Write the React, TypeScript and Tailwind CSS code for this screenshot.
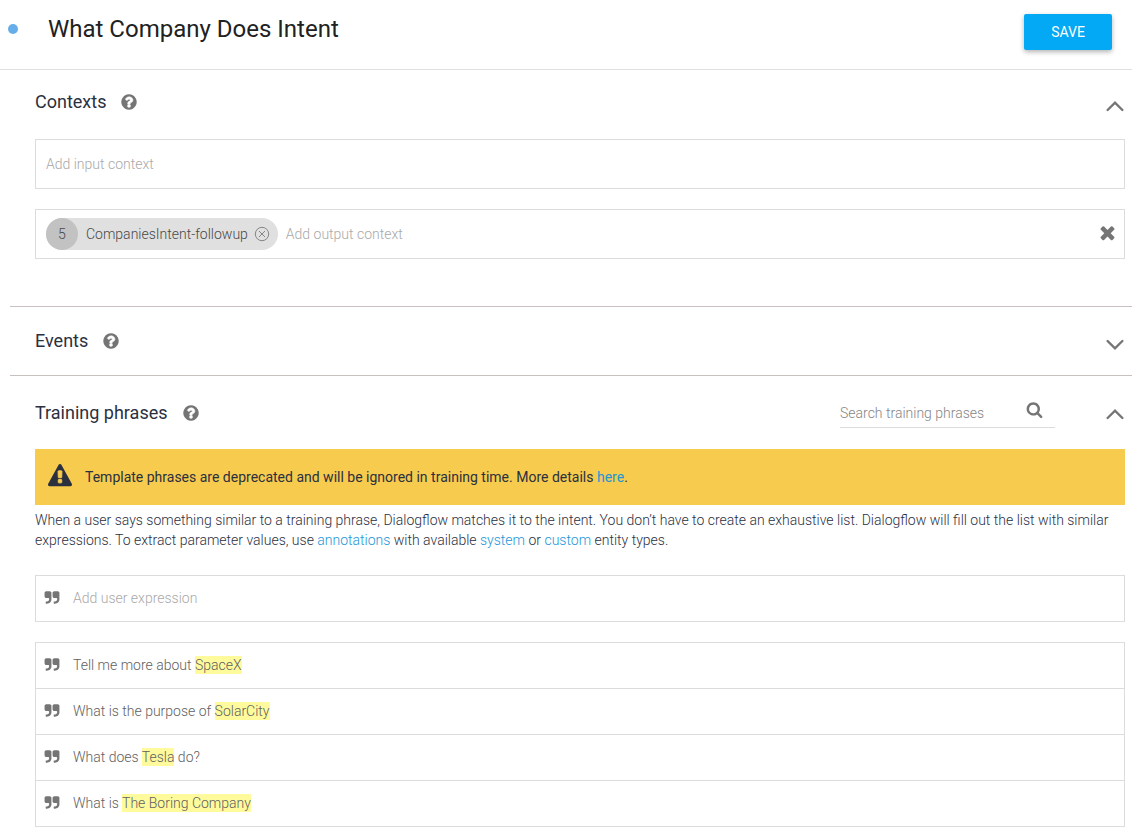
import { useState } from "react";
import type { ReactNode } from "react";

const QUESTION_MARK =
  "M1024 1376v-192q0-14-9-23t-23-9h-192q-14 0-23 9t-9 23v192q0 14 9 23t23 9h192q14 0 23-9t9-23zm256-672q0-88-55.5-163t-138.5-116-170-41q-243 0-371 213-15 24 8 42l132 100q7 6 19 6 16 0 25-12 53-68 86-92 34-24 86-24 48 0 85.5 26t37.5 59q0 38-20 61t-68 45q-63 28-115.5 86.5t-52.5 125.5v36q0 14 9 23t23 9h192q14 0 23-9t9-23q0-19 21.5-49.5t54.5-49.5q32-18 49-28.5t46-35 44.5-48 28-60.5 12.5-81z";
const EXCLAMATION_MARK =
  "M1024 1375v-190q0-14-9.5-23.5t-22.5-9.5h-192q-13 0-22.5 9.5t-9.5 23.5v190q0 14 9.5 23.5t22.5 9.5h192q13 0 22.5-9.5t9.5-23.5zm-2-374l18-459q0-12-10-19-13-11-24-11h-220q-11 0-24 11-10 7-10 21l17 457q0 10 10 16.5t24 6.5h185q14 0 23.5-6.5t10.5-16.5z";

const ICONS = {
  question:
    "M1664 896q0 209-103 385.5t-279.5 279.5-385.5 103-385.5-103-279.5-279.5-103-385.5 103-385.5 279.5-279.5 385.5-103 385.5 103 279.5 279.5 103 385.5z",
  times:
    "M1490 1322q0 40-28 68l-136 136q-28 28-68 28t-68-28l-294-294-294 294q-28 28-68 28t-68-28l-136-136q-28-28-28-68t28-68l294-294-294-294q-28-28-28-68t28-68l136-136q28-28 68-28t68 28l294 294 294-294q28-28 68-28t68 28l136 136q28 28 28 68t-28 68l-294 294 294 294q28 28 28 68z",
  search:
    "M1216 832q0-185-131.5-316.5t-316.5-131.5-316.5 131.5-131.5 316.5 131.5 316.5 316.5 131.5 316.5-131.5 131.5-316.5zm512 832q0 52-38 90t-90 38q-54 0-90-38l-343-342q-179 124-399 124-143 0-273.5-55.5t-225-150-150-225-55.5-273.5 55.5-273.5 150-225 225-150 273.5-55.5 273.5 55.5 225 150 150 225 55.5 273.5q0 220-124 399l343 343q37 37 37 90z",
  warning:
    "M1008 67l768 1408q35 63-2 126-17 29-46.5 46t-63.5 17h-1536q-34 0-63.5-17t-46.5-46q-37-63-2-126l768-1408q17-31 47-49t65-18 65 18 47 49z",
  quote:
    "M832 320v704q0 104-40.5 198.5t-109.5 163.5-163.5 109.5-198.5 40.5h-64q-26 0-45-19t-19-45v-128q0-26 19-45t45-19h64q106 0 181-75t75-181v-32q0-40-28-68t-68-28h-224q-80 0-136-56t-56-136v-384q0-80 56-136t136-56h384q80 0 136 56t56 136zm896 0v704q0 104-40.5 198.5t-109.5 163.5-163.5 109.5-198.5 40.5h-64q-26 0-45-19t-19-45v-128q0-26 19-45t45-19h64q106 0 181-75t75-181v-32q0-40-28-68t-68-28h-224q-80 0-136-56t-56-136v-384q0-80 56-136t136-56h384q80 0 136 56t56 136z",
};

function Icon({ name, className, children }: { name: keyof typeof ICONS; className: string; children?: ReactNode }) {
  return (
    <svg viewBox="0 0 1792 1792" fill="currentColor" aria-hidden="true" className={`block shrink-0 ${className}`}>
      <path d={ICONS[name]} />
      {children}
    </svg>
  );
}

function SectionTitle({ children, className = "" }: { children: ReactNode; className?: string }) {
  return (
    <div className={`flex items-center gap-[14px] ${className}`}>
      <h2 className="text-lg leading-6 text-[#2b303f]">{children}</h2>
      <button type="button" aria-label={`Help: ${children}`} className="text-[#757575]">
        <Icon name="question" className="size-[18px]">
          <path d={QUESTION_MARK} className="fill-white stroke-white" strokeWidth="60" />
        </Icon>
      </button>
    </div>
  );
}

function Toggle({ open, label }: { open: boolean; label: string }) {
  return (
    <button type="button" aria-expanded={open} aria-label={`Toggle ${label}`} className="text-[#757575]">
      <svg viewBox="0 0 20 12" className="block h-3 w-5" fill="none" stroke="currentColor" strokeWidth="2.4" strokeLinecap="round" strokeLinejoin="miter" aria-hidden="true">
        <path d={open ? "M2.6 10 10 2.6l7.4 7.4" : "M2.6 2 10 9.4l7.4-7.4"} />
      </svg>
    </button>
  );
}

const phrases = [
  { before: "Tell me more about ", entity: "SpaceX", after: "" },
  { before: "What is the purpose of ", entity: "SolarCity", after: "" },
  { before: "What does ", entity: "Tesla", after: " do?" },
  { before: "What is ", entity: "The Boring Company", after: "" },
];

const link = "text-[#2196d8]";

export default function App() {
  const [name, setName] = useState("What Company Does Intent");

  return (
    <div className="min-h-screen bg-white pb-2 font-['Roboto',sans-serif] text-sm font-light text-[#616161] antialiased">
      <header className="flex h-[70px] items-start border-b border-[#e0e0e0] pr-5 pl-2">
        <span className="mt-6 size-[10px] shrink-0 rounded-full bg-[#67ade9]" />
        <input
          aria-label="Intent name"
          value={name}
          onChange={(e) => setName(e.target.value)}
          className="mt-3 ml-[30px] h-[34px] min-w-0 flex-1 text-2xl font-normal text-[#212121] outline-none"
        />
        <button
          type="button"
          className="mt-3.5 h-9 w-[88px] rounded-[2px] bg-[#03a9f4] font-normal text-white shadow-[0_2px_5px_0_rgba(0,0,0,0.3)]"
        >
          SAVE
        </button>
      </header>

      <main className="ml-[10px]">
        <section className="border-b border-[#c9c0c0] pr-[7px] pb-[47px] pl-[25px]">
          <div className="flex h-[69px] items-center justify-between pt-[3px] font-normal">
            <SectionTitle className="pb-2">Contexts</SectionTitle>
            <Toggle open label="Contexts" />
          </div>
          <div className="flex h-[50px] items-center border border-[#dcdcdc] px-[10px]">
            <input
              aria-label="Input context"
              placeholder="Add input context"
              className="h-8 w-full outline-none placeholder:text-[#a9a9a9]"
            />
          </div>
          <div className="mt-5 flex h-[50px] items-center border border-[#dcdcdc] px-[10px]">
            <div className="flex h-8 shrink-0 items-center rounded-full bg-[#e0e0e0] pr-2 text-[#484848]">
              <span className="flex size-8 items-center justify-center rounded-full bg-[#c2c2c2]">5</span>
              <span className="ml-2">CompaniesIntent-followup</span>
              <button type="button" aria-label="Remove CompaniesIntent-followup" className="ml-[6px] text-[#858585]">
                <svg viewBox="0 0 16 16" className="block size-4" fill="none" stroke="currentColor" strokeWidth="1" aria-hidden="true">
                  <circle cx="8" cy="8" r="6.7" />
                  <path d="m5 5 6 6M11 5l-6 6" />
                </svg>
              </button>
            </div>
            <input
              aria-label="Output context"
              placeholder="Add output context"
              className="ml-2 h-8 min-w-0 flex-1 outline-none placeholder:text-[#a9a9a9]"
            />
            <button type="button" aria-label="Clear output contexts" className="-mr-1 pb-1 text-[#757575]">
              <Icon name="times" className="size-[21px]" />
            </button>
          </div>
        </section>

        <section className="border-b border-[#c9c0c0] pr-[7px] pl-[25px]">
          <div className="flex h-[68px] items-center justify-between pt-[7px] font-normal">
            <SectionTitle className="pb-2">Events</SectionTitle>
            <Toggle open={false} label="Events" />
          </div>
        </section>

        <section className="pr-[7px] pl-[25px]">
          <div className="flex h-[73px] items-center pt-[3px]">
            <SectionTitle className="flex-1 pb-[2px] font-normal">Training phrases</SectionTitle>
            <div className="mr-[50px] mb-[3px] flex h-[31px] w-[215px] items-center border-b border-[#dcdcdc] pr-3">
              <input
                aria-label="Search training phrases"
                placeholder="Search training phrases"
                className="h-7 min-w-0 flex-1 pt-[2px] outline-none placeholder:text-[#858585]"
              />
              <button type="button" aria-label="Search" className="pb-[6px] text-[#757575]">
                <Icon name="search" className="size-[17px]" />
              </button>
            </div>
            <Toggle open label="Training phrases" />
          </div>

          <div className="flex h-14 items-center gap-[13px] bg-[#f7cb4d] px-[13px] font-normal text-[#2b303f]">
            <Icon name="warning" className="mb-[2px] size-6">
              <path d={EXCLAMATION_MARK} className="fill-[#f7cb4d] stroke-[#f7cb4d]" strokeWidth="70" />
            </Icon>
            <p>
              Template phrases are deprecated and will be ignored in training time. More details{" "}
              <a href="#details" className={link}>
                here
              </a>
              .
            </p>
          </div>

          <p className="mt-[5px] leading-5 text-[#2b303f]">
            When a user says something similar to a training phrase, Dialogflow matches it to the intent. You don’t have
            to create an exhaustive list. Dialogflow will fill out the list with similar expressions. To extract parameter
            values, use{" "}
            <a href="#annotations" className={link}>
              annotations
            </a>{" "}
            with available{" "}
            <a href="#system" className={link}>
              system
            </a>{" "}
            or{" "}
            <a href="#custom" className={link}>
              custom
            </a>{" "}
            entity types.
          </p>

          <div className="mt-[25px] flex h-[47px] items-center gap-[13px] border border-[#dcdcdc] px-2 pb-[2px]">
            <Icon name="quote" className="size-4 text-[#757575]" />
            <input
              aria-label="User expression"
              placeholder="Add user expression"
              className="h-8 w-full outline-none placeholder:text-[#a9a9a9]"
            />
          </div>

          <ul className="mt-5 border border-b-0 border-[#dcdcdc]">
            {phrases.map((p) => (
              <li key={p.entity} className="flex h-[46px] items-center gap-[13px] border-b border-[#dcdcdc] px-2 pb-[2px]">
                <Icon name="quote" className="size-4 text-[#757575]" />
                <span className="whitespace-pre">
                  {p.before}
                  <mark className="bg-[#fffb9d] py-px text-inherit">{p.entity}</mark>
                  {p.after}
                </span>
              </li>
            ))}
          </ul>
        </section>
      </main>
    </div>
  );
}
